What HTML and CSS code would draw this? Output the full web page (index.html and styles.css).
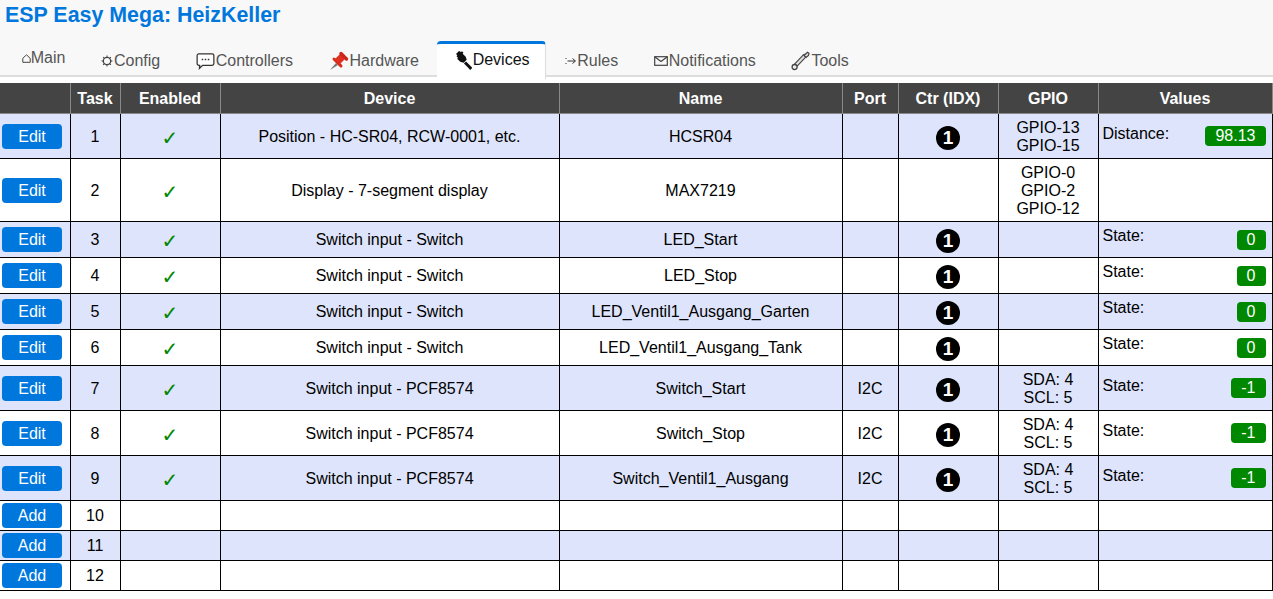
FILE: index.html
```html
<!DOCTYPE html>
<html lang="de">
<head>
  <meta charset="UTF-8">
  <meta name="viewport" content="width=device-width, initial-scale=1">
  <title>ESP Easy Mega: HeizKeller</title>
  <link rel="stylesheet" href="styles.css">
</head>
<body>

<div class="headerbar">
  <h1>ESP Easy Mega: HeizKeller</h1>
  <nav class="menubar">
    <a class="menu menu-main">
      <svg class="ico-main" width="9" height="9" viewBox="0 0 9 9"><path d="M.8 8.300V4.300L4.500.8l3.700 3.500v4z" fill="none" stroke="#444" stroke-width="1"/></svg>Main
    </a>
    <a class="menu">
      <svg class="ico" width="12" height="12" viewBox="0 0 13 13"><circle cx="6.500" cy="6.500" r="4" fill="none" stroke="#444" stroke-width="1.400"/><path d="M6.500 .6v2M6.500 10.400v2M.6 6.500h2M10.400 6.500h2M2.300 2.300l1.400 1.400M9.300 9.300l1.400 1.400M2.300 10.700l1.400-1.400M9.300 3.700l1.400-1.400" stroke="#444" stroke-width="1.100"/></svg>Config
    </a>
    <a class="menu">
      <svg class="ico" width="19" height="18" viewBox="0 0 20 18"><path d="M3 1.500h14a1.800 1.800 0 0 1 1.800 1.800v8.400a1.800 1.800 0 0 1-1.800 1.800H7l-3.400 3.200.3-3.200H3a1.800 1.800 0 0 1-1.800-1.800V3.300A1.800 1.800 0 0 1 3 1.500z" fill="#fff" stroke="#333" stroke-width="1.300"/><path d="M6 7.500h1.600M9.200 7.500h1.600M12.400 7.500H14" stroke="#333" stroke-width="1.600"/></svg>Controllers
    </a>
    <a class="menu">
      <svg class="ico" width="20" height="20" viewBox="0 0 20 20"><path d="M1 19l6-7 2 2z" fill="#777"/><path d="M5 8l7 7" stroke="#d62a18" stroke-width="3" stroke-linecap="round"/><path d="M8 11l6-6" stroke="#e0301e" stroke-width="7"/><path d="M12 2.500l5.500 5.500" stroke="#c9281a" stroke-width="3.400" stroke-linecap="round"/></svg>Hardware
    </a>
    <a class="menu active">
      <svg class="ico" width="17" height="20" viewBox="0 0 17 20"><path d="M1 4l3-3 2 1 1-.8 1.500 1.500-.8 1 3 3 1 3-3 3-3.500-1-3-3 .8-1-1.500-1.500.8-1z" fill="#111"/><path d="M10 12.500l4 4 2.300 2.500" fill="none" stroke="#111" stroke-width="3"/></svg>Devices
    </a>
    <a class="menu">
      <svg class="ico" width="11" height="8" viewBox="0 0 11 8"><path d="M.5 1.500h1M.5 6.500h1M2.500 4H10M7.500 1.500L10.500 4l-3 2.500" fill="none" stroke="#333" stroke-width="1"/></svg>Rules
    </a>
    <a class="menu">
      <svg class="ico" width="14" height="10" viewBox="0 0 14 10"><rect x=".7" y=".7" width="12.600" height="8.600" fill="none" stroke="#444" stroke-width="1.200"/><path d="M1 1l6 4.500L13 1" fill="none" stroke="#444" stroke-width="1.200"/></svg>Notifications
    </a>
    <a class="menu">
      <svg class="ico" width="19" height="20" viewBox="0 0 19 20"><path d="M4.500 14.500L13.500 5" stroke="#444" stroke-width="4.400" stroke-linecap="round"/><path d="M4.500 14.500L13.500 5" stroke="#ddd" stroke-width="2.200"/><circle cx="3.600" cy="16" r="2.500" fill="#eee" stroke="#444" stroke-width="1.300"/><path d="M13 4.500l3.500-3.300 1.500 1-.5 2.300-2.500 2z" fill="#ddd" stroke="#444" stroke-width="1.200"/></svg>Tools
    </a>
  </nav>
</div>

<table class="devices">
  <colgroup>
    <col class="c-btn"><col class="c-task"><col class="c-en"><col class="c-dev"><col class="c-name"><col class="c-port"><col class="c-ctr"><col class="c-gpio"><col class="c-val">
  </colgroup>
  <thead>
    <tr><th></th><th>Task</th><th>Enabled</th><th>Device</th><th>Name</th><th>Port</th><th>Ctr (IDX)</th><th>GPIO</th><th>Values</th></tr>
  </thead>
  <tbody>
    <tr class="h2">
      <td class="btncell"><a class="button">Edit</a></td><td>1</td><td><span class="check">✓</span></td>
      <td>Position - HC-SR04, RCW-0001, etc.</td><td>HCSR04</td><td></td><td><span class="ctr">1</span></td>
      <td>GPIO-13<br>GPIO-15</td>
      <td class="vals"><div class="val"><span class="lbl">Distance:</span><span class="badge">98.13</span></div></td>
    </tr>
    <tr class="h3">
      <td class="btncell"><a class="button">Edit</a></td><td>2</td><td><span class="check">✓</span></td>
      <td>Display - 7-segment display</td><td>MAX7219</td><td></td><td></td>
      <td>GPIO-0<br>GPIO-2<br>GPIO-12</td><td class="vals"></td>
    </tr>
    <tr class="h1">
      <td class="btncell"><a class="button">Edit</a></td><td>3</td><td><span class="check">✓</span></td>
      <td>Switch input - Switch</td><td>LED_Start</td><td></td><td><span class="ctr">1</span></td><td></td>
      <td class="vals"><div class="val"><span class="lbl">State:</span><span class="badge">0</span></div></td>
    </tr>
    <tr class="h1">
      <td class="btncell"><a class="button">Edit</a></td><td>4</td><td><span class="check">✓</span></td>
      <td>Switch input - Switch</td><td>LED_Stop</td><td></td><td><span class="ctr">1</span></td><td></td>
      <td class="vals"><div class="val"><span class="lbl">State:</span><span class="badge">0</span></div></td>
    </tr>
    <tr class="h1">
      <td class="btncell"><a class="button">Edit</a></td><td>5</td><td><span class="check">✓</span></td>
      <td>Switch input - Switch</td><td>LED_Ventil1_Ausgang_Garten</td><td></td><td><span class="ctr">1</span></td><td></td>
      <td class="vals"><div class="val"><span class="lbl">State:</span><span class="badge">0</span></div></td>
    </tr>
    <tr class="h1">
      <td class="btncell"><a class="button">Edit</a></td><td>6</td><td><span class="check">✓</span></td>
      <td>Switch input - Switch</td><td>LED_Ventil1_Ausgang_Tank</td><td></td><td><span class="ctr">1</span></td><td></td>
      <td class="vals"><div class="val"><span class="lbl">State:</span><span class="badge">0</span></div></td>
    </tr>
    <tr class="h2">
      <td class="btncell"><a class="button">Edit</a></td><td>7</td><td><span class="check">✓</span></td>
      <td>Switch input - PCF8574</td><td>Switch_Start</td><td>I2C</td><td><span class="ctr">1</span></td>
      <td>SDA: 4<br>SCL: 5</td>
      <td class="vals"><div class="val"><span class="lbl">State:</span><span class="badge">-1</span></div></td>
    </tr>
    <tr class="h2">
      <td class="btncell"><a class="button">Edit</a></td><td>8</td><td><span class="check">✓</span></td>
      <td>Switch input - PCF8574</td><td>Switch_Stop</td><td>I2C</td><td><span class="ctr">1</span></td>
      <td>SDA: 4<br>SCL: 5</td>
      <td class="vals"><div class="val"><span class="lbl">State:</span><span class="badge">-1</span></div></td>
    </tr>
    <tr class="h2">
      <td class="btncell"><a class="button">Edit</a></td><td>9</td><td><span class="check">✓</span></td>
      <td>Switch input - PCF8574</td><td>Switch_Ventil1_Ausgang</td><td>I2C</td><td><span class="ctr">1</span></td>
      <td>SDA: 4<br>SCL: 5</td>
      <td class="vals"><div class="val"><span class="lbl">State:</span><span class="badge">-1</span></div></td>
    </tr>
    <tr class="h0"><td class="btncell"><a class="button">Add</a></td><td>10</td><td></td><td></td><td></td><td></td><td></td><td></td><td></td></tr>
    <tr class="h0"><td class="btncell"><a class="button">Add</a></td><td>11</td><td></td><td></td><td></td><td></td><td></td><td></td><td></td></tr>
    <tr class="h0"><td class="btncell"><a class="button">Add</a></td><td>12</td><td></td><td></td><td></td><td></td><td></td><td></td><td></td></tr>
  </tbody>
</table>

</body>
</html>
```

FILE: styles.css
```css
body {
  font-family: "Liberation Sans", Arial, sans-serif;
  font-size: 16px;
  color: #000;
  background-color: #fff;
  margin: 0;
}

.headerbar {
  background-color: #f8f8f8;
  border-bottom: 2px solid #ddd;
  height: 75px;
  margin-bottom: 6px;
}

h1 {
  margin: 0;
  padding: 3px 0 0 5px;
  height: 41px;
  box-sizing: border-box;
  font-size: 21.4px;
  line-height: 24px;
  font-weight: bold;
  color: #07d;
}

.menubar {
  display: flex;
  align-items: flex-start;
  padding-left: 4px;
  height: 34px;
}

.menu {
  display: flex;
  align-items: center;
  height: 38px;
  padding: 2px 17.75px 0;
  box-sizing: border-box;
  color: #555;
  white-space: nowrap;
}

.menu-main {
  padding-bottom: 6px;
}

.ico {
  flex: none;
  margin-right: 1px;
}

.ico-main {
  flex: none;
}

.menu.active {
  background-color: #fff;
  color: #111;
  border-top: 3px solid #07d;
  border-right: 1px solid #ddd;
  border-radius: 4px 4px 0 0;
  padding: 0 15px 3px 18px;
  margin-right: 2px;
}

.devices {
  border-collapse: collapse;
  table-layout: fixed;
  width: 1272px;
}

.c-btn { width: 70px; }
.c-task { width: 50px; }
.c-en { width: 100px; }
.c-dev { width: 339px; }
.c-name { width: 283px; }
.c-port { width: 56px; }
.c-ctr { width: 100px; }
.c-gpio { width: 100px; }
.c-val { width: 174px; }

th {
  height: 29px;
  padding: 0 4px;
  background-color: #444;
  color: #fff;
  font-weight: bold;
  border: 1px solid #888;
  border-top-color: #444;
}

th:first-child { border-left: none; }

td {
  padding: 0 4px;
  text-align: center;
  vertical-align: middle;
  line-height: 18px;
  border: 1px solid #000;
  overflow: hidden;
  white-space: nowrap;
}

td:first-child { border-left: none; }

tbody tr:nth-child(odd) { background-color: #dde4fb; }

.h0 td { height: 29px; }
.h1 td { height: 35px; }
.h2 td { height: 42px; padding-top: 2px; }
.h3 td { height: 60px; padding-top: 2px; }

.devices td.btncell {
  padding: 0 0 0 2px;
  text-align: left;
}

.button {
  display: block;
  width: 60px;
  height: 25px;
  line-height: 25px;
  text-align: center;
  color: #fff;
  background-color: #07d;
  border-radius: 4px;
}

.check {
  display: block;
  color: #080;
  font-family: "DejaVu Sans", sans-serif;
  font-weight: bold;
  font-size: 20px;
  position: relative;
  top: 1px;
}

.ctr {
  display: inline-block;
  width: 24px;
  height: 24px;
  line-height: 24px;
  margin-top: 2px;
  border-radius: 50%;
  background-color: #000;
  color: #fff;
  font-weight: bold;
  font-size: 19px;
  vertical-align: middle;
}

.devices td.vals {
  padding: 0 6px 0 4px;
}

.val {
  display: flex;
  justify-content: space-between;
  align-items: flex-start;
  text-align: left;
}

.lbl {
  line-height: 16px;
}

.h1 .lbl {
  margin-top: -2px;
}

.badge {
  height: 20px;
  line-height: 20px;
  padding: 0 10px;
  background-color: #080;
  color: #fff;
  border-radius: 4px;
}
```
